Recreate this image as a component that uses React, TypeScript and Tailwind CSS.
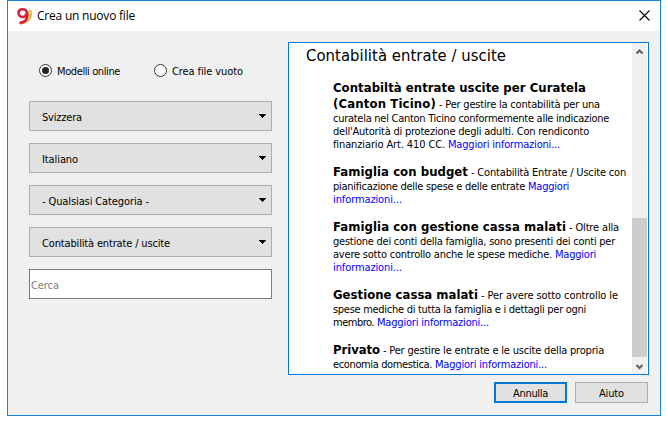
import { useLayoutEffect, useRef } from 'react'
import type { ReactNode } from 'react'

/* Text run whose tracking is tuned so that it fills the given advance width. */
function Run({ w, className = '', children }: { w: number; className?: string; children: string }) {
  const ref = useRef<HTMLSpanElement>(null)
  useLayoutEffect(() => {
    const el = ref.current
    if (!el) return
    el.style.letterSpacing = '0px'
    const natural = el.getBoundingClientRect().width
    el.style.letterSpacing = `${(w - natural) / children.length}px`
  }, [w, children])
  return (
    <span ref={ref} className={`inline-block whitespace-pre ${className}`}>
      {children}
    </span>
  )
}

const BOLD = 'text-[13px] font-bold'
const LINK = 'text-[#0000ff]'

function Line({ big = false, children }: { big?: boolean; children: ReactNode }) {
  return <div className={`flex items-baseline gap-[3px] ${big ? 'h-4 leading-4' : 'h-[13px] leading-[13px]'}`}>{children}</div>
}

function Select({ w, children }: { w: number; children: string }) {
  return (
    <button className="flex h-[30px] w-full items-center justify-between border border-[#adadad] bg-[#e1e1e1] pr-[5px] pl-3">
      <Run w={w} className="pt-[5px]">{children}</Run>
      <svg width="7" height="4" className="mb-px" shapeRendering="crispEdges">
        <path d="M0 0H7V1H6V2H5V3H4V4H3V3H2V2H1V1H0Z" />
      </svg>
    </button>
  )
}

function Radio({ checked = false, w, children }: { checked?: boolean; w: number; children: string }) {
  return (
    <label className="flex h-4 items-center gap-[5px]">
      <span className="mb-px flex size-[13px] items-center justify-center rounded-full border border-[#333] bg-white">
        {checked && <span className="size-[7px] rounded-full bg-[#222]" />}
      </span>
      <Run w={w} className="pt-0.5">{children}</Run>
    </label>
  )
}

export default function App() {
  return (
    <div className="h-[423px] w-[668px] overflow-hidden bg-white pl-[7px] font-['DejaVu_Sans_Condensed','DejaVu_Sans',sans-serif] text-[11px] text-black">
      <div className="flex h-[416px] w-[654px] flex-col border border-[#1883d7] bg-[#f0f0f0]">
        <header className="flex h-[30px] shrink-0 items-center bg-white pr-[10px] pl-[9px]">
          <svg width="15" height="17" viewBox="0 0 15 17">
            <path d="M12.500 .5C16.500 5 15.500 16 4 16.500L1 15C9 14.500 12 8 11.500 2Z" fill="#edcf62" />
            <path d="M13.700 2C16 8 12.500 15.500 3 16" fill="none" stroke="#b8973c" strokeWidth=".7" />
            <path d="M9.300 5.200C9.300 8 7.800 9 5.800 9C3.500 9 1.500 7.500 1.500 5.100C1.500 2.700 3.200 1.300 5.700 1.300C8.600 1.300 10.300 3.400 10.300 6.900C10.300 12 7.500 14.700 2.500 14.700" fill="none" stroke="#d91f3d" strokeWidth="2.600" />
          </svg>
          <div className="ml-[5px] font-['Open_Sans','Noto_Sans',sans-serif] text-[12px]">
            <Run w={98}>Crea un nuovo file</Run>
          </div>
          <svg className="mb-px ml-auto" width="11" height="11" viewBox="0 0 11 11">
            <path d="M.5 .5L10.500 10.500M10.500 .5L.5 10.500" stroke="#000" strokeWidth="1.100" />
          </svg>
        </header>

        <div className="flex h-[344px] shrink-0 pt-[11px] pl-[21px]">
          <section className="w-[243px] pt-[21px]">
            <div className="flex gap-[34px] pl-[10px]">
              <Radio checked w={63}>Modelli online</Radio>
              <Radio w={71}>Crea file vuoto</Radio>
            </div>
            <div className="mt-[22px] flex flex-col gap-3">
              <Select w={40}>Svizzera</Select>
              <Select w={36}>Italiano</Select>
              <Select w={107}>- Qualsiasi Categoria -</Select>
              <Select w={128}>Contabilità entrate / uscite</Select>
              <div className="flex h-[30px] items-center border border-[#7a7a7a] bg-white pl-px text-[#7f7f7f]">
                <Run w={28} className="pt-[5px]">Cerca</Run>
              </div>
            </div>
          </section>

          <section className="ml-4 flex h-[333px] w-[361px] border border-[#0078d7] bg-white">
            <div className="w-[343px] pl-[17px]">
              <h1 className="mt-[3px] h-5 text-[16.5px] leading-5">
                <Run w={200}>Contabilità entrate / uscite</Run>
              </h1>
              <div className="mt-[14px] flex flex-col gap-[13px] pl-[27px]">
                <article>
                  <Line big><Run w={253} className={BOLD}>Contabiltà entrate uscite per Curatela</Run></Line>
                  <Line big><Run w={103} className={BOLD}>(Canton Ticino)</Run><Run w={161}>- Per gestire la contabilità per una</Run></Line>
                  <Line><Run w={276}>curatela nel Canton Ticino conformemente alle indicazione</Run></Line>
                  <Line><Run w={256}>dell'Autorità di protezione degli adulti. Con rendiconto</Run></Line>
                  <Line><Run w={112}>finanziario Art. 410 CC.</Run><Run w={112} className={LINK}>Maggiori informazioni...</Run></Line>
                </article>
                <article>
                  <Line big><Run w={135} className={BOLD}>Famiglia con budget</Run><Run w={155}>- Contabilità Entrate / Uscite con</Run></Line>
                  <Line><Run w={192}>pianificazione delle spese e delle entrate</Run><Run w={41} className={LINK}>Maggiori</Run></Line>
                  <Line><Run w={69} className={LINK}>informazioni...</Run></Line>
                </article>
                <article>
                  <Line big><Run w={233} className={BOLD}>Famiglia con gestione cassa malati</Run><Run w={50}>- Oltre alla</Run></Line>
                  <Line><Run w={282}>gestione dei conti della famiglia, sono presenti dei conti per</Run></Line>
                  <Line><Run w={219}>avere sotto controllo anche le spese mediche.</Run><Run w={41} className={LINK}>Maggiori</Run></Line>
                  <Line><Run w={69} className={LINK}>informazioni...</Run></Line>
                </article>
                <article>
                  <Line big><Run w={145} className={BOLD}>Gestione cassa malati</Run><Run w={137}>- Per avere sotto controllo le</Run></Line>
                  <Line><Run w={253}>spese mediche di tutta la famiglia e i dettagli per ogni</Run></Line>
                  <Line><Run w={41}>membro.</Run><Run w={112} className={LINK}>Maggiori informazioni...</Run></Line>
                </article>
                <article>
                  <Line big><Run w={47} className={BOLD}>Privato</Run><Run w={221}>- Per gestire le entrate e le uscite della propria</Run></Line>
                  <Line><Run w={99}>economia domestica.</Run><Run w={112} className={LINK}>Maggiori informazioni...</Run></Line>
                </article>
              </div>
            </div>
            <div className="flex w-[15px] flex-col items-center bg-[#f0f0f0] pt-1.5 pb-1">
              <svg width="7" height="6" viewBox="0 0 7 6">
                <path d="M.5 4.500L3.500 1.500L6.500 4.500" fill="none" stroke="#606060" strokeWidth="2" />
              </svg>
              <div className="mt-auto mb-[7px] h-[139px] w-full bg-[#cdcdcd]" />
              <svg width="7" height="6" viewBox="0 0 7 6">
                <path d="M.5 1L3.500 4L6.500 1" fill="none" stroke="#606060" strokeWidth="2" />
              </svg>
            </div>
          </section>
        </div>

        <footer className="flex justify-end gap-2 pt-[7px] pr-3">
          <button className="flex h-[21px] w-[73px] items-center justify-center border-2 border-[#0078d7] bg-[#e1e1e1]">
            <Run w={35} className="pt-[3px]">Annulla</Run>
          </button>
          <button className="flex h-[21px] w-[73px] items-center justify-center border border-[#adadad] bg-[#e1e1e1]">
            <Run w={25} className="pt-[3px]">Aiuto</Run>
          </button>
        </footer>
      </div>
    </div>
  )
}
